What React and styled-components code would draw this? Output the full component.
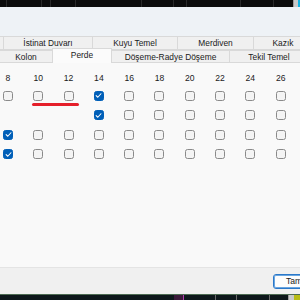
import React from "react";
import styled, { createGlobalStyle } from "styled-components";

const Global = createGlobalStyle`
  html, body { margin: 0; padding: 0; }
  body {
    width: 300px;
    height: 300px;
    overflow: hidden;
    font-family: "Liberation Sans", Arial, sans-serif;
    background: #0c0c0c;
  }
`;

const Screen = styled.div`
  width: 300px;
  height: 300px;
  display: flex;
  flex-direction: column;
  overflow: hidden;
`;

const Strip = styled.div`
  height: ${(p) => p.h}px;
  flex: none;
  display: flex;
  background: ${(p) => p.bg};
  border-top: ${(p) => (p.line ? `1px solid ${p.line}` : "none")};
`;

const Seg = styled.div`
  flex: none;
  width: ${(p) => p.w}px;
  background: ${(p) => p.bg || "transparent"};
  border-right: 1px solid ${(p) => p.edge || "#2a2a2a"};
`;

const Window = styled.div`
  flex: 1;
  min-height: 0;
  display: flex;
  flex-direction: column;
  background: #eef2f6;
`;

const TitleSpace = styled.div`
  height: 29px;
  flex: none;
`;

const TabRow = styled.div`
  display: flex;
  height: ${(p) => p.h}px;
  flex: none;
  position: relative;
  z-index: ${(p) => p.z || 0};
`;

const Tab = styled.div`
  flex: none;
  width: ${(p) => p.w}px;
  box-sizing: border-box;
  display: flex;
  align-items: center;
  justify-content: center;
  font-size: 8.4px;
  color: #1a1a1a;
  white-space: nowrap;
  overflow: hidden;
  background: ${(p) => (p.active ? "#fbfbfb" : "#f0f0f0")};
  border: 1px solid #d9d9d9;
  border-bottom: ${(p) => (p.active ? "none" : "1px solid #d9d9d9")};
  margin-top: ${(p) => (p.active ? -2 : 0)}px;
  margin-left: -1px;
  padding-bottom: ${(p) => (p.active ? 2 : 0)}px;
`;

const Panel = styled.div`
  position: relative;
  flex: 1;
  min-height: 0;
  background: #f9f9f9;
  padding-top: 9px;
`;

const Grid = styled.div`
  display: grid;
  grid-template-columns: repeat(10, 30.3px);
`;

const Num = styled.div`
  width: 16px;
  height: 12px;
  line-height: 12px;
  text-align: center;
  font-size: 8.6px;
  color: #1b1b1b;
  margin-bottom: 2.3px;
`;

const Cell = styled.div`
  height: 19.4px;
  display: flex;
  align-items: center;
  padding-left: 3px;
`;

const Box = styled.div`
  width: 10px;
  height: 10px;
  box-sizing: border-box;
  border-radius: 2.5px;
  border: 1px solid ${(p) => (p.on ? "#005fb8" : "#8a8a8a")};
  background: ${(p) => (p.on ? "#005fb8" : "#f4f4f4")};
  display: flex;
  align-items: center;
  justify-content: center;
`;

const Underline = styled.div`
  position: absolute;
  left: 32px;
  top: 40px;
  width: 47px;
  height: 3px;
  border-radius: 2px;
  background: #e51f2a;
`;

const Footer = styled.div`
  height: 27px;
  flex: none;
  box-sizing: border-box;
  background: #f0f0f0;
  border-top: 1px solid #e4e4e4;
  display: flex;
  justify-content: flex-end;
  align-items: flex-start;
  padding-top: 6px;
`;

const Button = styled.div`
  width: 40px;
  height: 15px;
  margin-right: -13px;
  box-sizing: border-box;
  border: 1px solid #2b78c9;
  box-shadow: inset 0 0 0 1px #6aa6e0;
  border-radius: 3px;
  background: #fdfdfd;
  font-size: 8.6px;
  color: #1a1a1a;
  line-height: 13px;
  padding-left: 12px;
  white-space: nowrap;
  overflow: hidden;
`;

const Check = () => (
  <svg width="7" height="7" viewBox="0 0 8 8">
    <path d="M1.3 4.2 L3.2 6 L6.8 2" fill="none" stroke="#fff" strokeWidth="1.2" strokeLinecap="round" strokeLinejoin="round" />
  </svg>
);

const nums = [8, 10, 12, 14, 16, 18, 20, 22, 24, 26];

// null = no checkbox, true = checked, false = unchecked
const rows = [
  [false, false, false, true, false, false, false, false, false, false],
  [null, null, null, true, false, false, false, false, false, false],
  [true, false, false, false, false, false, false, false, false, false],
  [true, false, false, false, false, false, false, false, false, false],
];

const App = () => {
  return (
    <Screen>
      <Global />
      <Strip h={7} bg="#0c0c0c">
        <Seg w={6} />
        <Seg w={34} />
        <Seg w={8} />
        <Seg w={24} />
        <Seg w={65} />
        <Seg w={31} />
        <Seg w={12} />
        <Seg w={53} />
        <Seg w={32} />
        <Seg w={19} edge="#9a9a9a" />
        <Seg w={3} bg="#c9c9c9" edge="#c9c9c9" />
        <Seg w={12} bg="#12b4e4" edge="#12b4e4" />
      </Strip>
      <Window>
        <TitleSpace />
        <TabRow h={14}>
          <Tab w={5} />
          <Tab w={90}>İstinat Duvarı</Tab>
          <Tab w={86}>Kuyu Temel</Tab>
          <Tab w={77}>Merdiven</Tab>
          <Tab w={60}>Kazık</Tab>
        </TabRow>
        <TabRow h={13} z={1}>
          <Tab w={54}>Kolon</Tab>
          <Tab w={60} active>Perde</Tab>
          <Tab w={119}>Döşeme-Radye Döşeme</Tab>
          <Tab w={80}>Tekil Temel</Tab>
        </TabRow>
        <Panel>
          <Grid>
            {nums.map((n) => (
              <div key={n}>
                <Num>{n}</Num>
              </div>
            ))}
            {rows.map((r, i) =>
              r.map((v, j) => (
                <Cell key={`${i}-${j}`}>
                  {v !== null && <Box on={v}>{v && <Check />}</Box>}
                </Cell>
              ))
            )}
          </Grid>
          <Underline />
        </Panel>
        <Footer>
          <Button>Tamam</Button>
        </Footer>
      </Window>
      <Strip h={5} bg="#0d171b" line="#4c6a52">
        <Seg w={173} edge="#0d171b" />
        <Seg w={9} bg="#3a1a3a" edge="#b03ab0" />
        <Seg w={31} edge="#6a6a6a" />
        <Seg w={20} edge="#6a6a6a" />
        <Seg w={32} edge="#6a6a6a" />
        <Seg w={18} edge="#9a9a9a" />
        <Seg w={4} bg="#c9c9c9" edge="#c9c9c9" />
        <Seg w={12} bg="#b8bc16" edge="#b8bc16" />
      </Strip>
    </Screen>
  );
};

export default App;
